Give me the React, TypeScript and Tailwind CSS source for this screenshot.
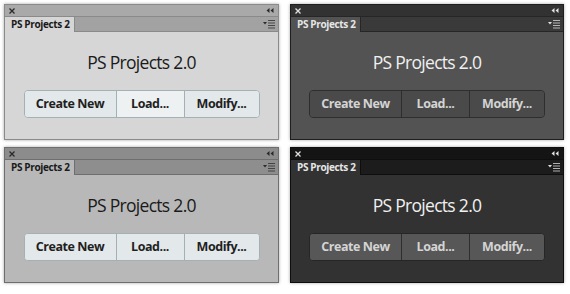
import React from "react";

type Theme = {
  panel: string;
  header: string;
  tabRow: string;
  tab: string;
  tabText: string;
  body: string;
  title: string;
  group: string;
  btn: string;
  btnMid: string;
  btnText: string;
  divider: string;
  icon: string;
};

const themes: Theme[] = [
  {
    panel: "border-[#8a8a8a]",
    header: "bg-[#a9a9a9]",
    tabRow: "bg-[#a2a2a2] border-[#8a8a8a]",
    tab: "bg-[#d6d6d6] border-[#8a8a8a]",
    tabText: "text-[#1a1a1a]",
    body: "bg-[#d6d6d6]",
    title: "text-[#1a1a1a]",
    group: "border-[#a3b1b4] bg-[#e3e8ea]",
    btn: "bg-[#e3e8ea]",
    btnMid: "bg-[#eef1f2]",
    btnText: "text-[#1f1f1f]",
    divider: "border-[#a3b1b4]",
    icon: "#2a2a2a",
  },
  {
    panel: "border-[#1e1e1e]",
    header: "bg-[#323232]",
    tabRow: "bg-[#3a3a3a] border-[#262626]",
    tab: "bg-[#535353] border-[#262626]",
    tabText: "text-[#e6e6e6]",
    body: "bg-[#535353]",
    title: "text-[#f0f0f0]",
    group: "border-[#2e2e2e] bg-[#4a4a4a]",
    btn: "bg-[#4a4a4a]",
    btnMid: "bg-[#4a4a4a]",
    btnText: "text-[#d4d4d4]",
    divider: "border-[#2e2e2e]",
    icon: "#e0e0e0",
  },
  {
    panel: "border-[#6e6e6e]",
    header: "bg-[#8c8c8c]",
    tabRow: "bg-[#8e8e8e] border-[#6e6e6e]",
    tab: "bg-[#b8b8b8] border-[#6e6e6e]",
    tabText: "text-[#1a1a1a]",
    body: "bg-[#b8b8b8]",
    title: "text-[#1a1a1a]",
    group: "border-[#a3b1b4] bg-[#e3e8ea]",
    btn: "bg-[#e3e8ea]",
    btnMid: "bg-[#e3e8ea]",
    btnText: "text-[#1f1f1f]",
    divider: "border-[#a3b1b4]",
    icon: "#2a2a2a",
  },
  {
    panel: "border-[#0e0e0e]",
    header: "bg-[#141414]",
    tabRow: "bg-[#1c1c1c] border-[#0e0e0e]",
    tab: "bg-[#323232] border-[#0e0e0e]",
    tabText: "text-[#e6e6e6]",
    body: "bg-[#323232]",
    title: "text-[#f0f0f0]",
    group: "border-[#262626] bg-[#575757]",
    btn: "bg-[#575757]",
    btnMid: "bg-[#575757]",
    btnText: "text-[#d4d4d4]",
    divider: "border-[#2e2e2e]",
    icon: "#e0e0e0",
  },
];

function Panel({ t }: { t: Theme }) {
  return (
    <div
      className={`flex flex-col border ${t.panel} shadow-[0_0_3px_rgba(0,0,0,0.35)] h-[136px] overflow-hidden`}
    >
      <div className={`${t.header} h-[11px] flex items-center justify-between px-[4px]`}>
        <svg width="6" height="6" viewBox="0 0 6 6">
          <path d="M0.5 0.5 L5.5 5.5 M5.5 0.5 L0.5 5.5" stroke={t.icon} strokeWidth="1.3" />
        </svg>
        <svg width="8" height="5" viewBox="0 0 8 5">
          <path d="M3.5 0 L0.5 2.5 L3.5 5 Z M7.5 0 L4.5 2.5 L7.5 5 Z" fill={t.icon} />
        </svg>
      </div>
      <div className={`${t.tabRow} h-[16px] flex items-stretch border-t`}>
        <div
          className={`${t.tab} ${t.tabText} w-[70px] border-r flex items-center pl-[6px] text-[10px] font-bold font-['Open_Sans',sans-serif] tracking-[-0.35px]`}
        >
          PS Projects 2
        </div>
        <div className="flex-1 border-b border-inherit" />
        <div className="flex items-center gap-[1px] pr-[3px] border-b border-inherit">
          <svg width="12" height="9" viewBox="0 0 12 9">
            <path d="M0 2 L4 2 L2 4.5 Z" fill={t.icon} />
            <path d="M5 0.5 H12 M5 3 H12 M5 5.5 H12 M5 8 H12" stroke={t.icon} strokeWidth="1" opacity="0.75" />
          </svg>
        </div>
      </div>
      <div className={`${t.body} flex-1 flex flex-col items-center pt-[18px]`}>
        <div
          className={`${t.title} text-[17.5px] leading-[24px] font-['Open_Sans',sans-serif] tracking-[-0.7px]`}
        >
          PS Projects 2.0
        </div>
        <div
          className={`mt-[16px] flex h-[28px] w-[236px] rounded-[4px] border ${t.group} overflow-hidden text-[12.5px] font-bold font-['Open_Sans',sans-serif] tracking-[-0.45px] ${t.btnText}`}
        >
          <div className={`${t.btn} w-[91px] flex items-center justify-center`}>Create New</div>
          <div className={`${t.btnMid} w-[68px] border-l ${t.divider} flex items-center justify-center`}>
            Load...
          </div>
          <div className={`${t.btn} flex-1 border-l ${t.divider} flex items-center justify-center`}>
            Modify...
          </div>
        </div>
      </div>
    </div>
  );
}

export default function App() {
  return (
    <div className="w-[570px] h-[294px] bg-white pl-[4px] pt-[4px]">
      <div className="grid grid-cols-[275px_274px] gap-x-[11px] gap-y-[7px]">
        {themes.map((t, i) => (
          <Panel key={i} t={t} />
        ))}
      </div>
    </div>
  );
}
